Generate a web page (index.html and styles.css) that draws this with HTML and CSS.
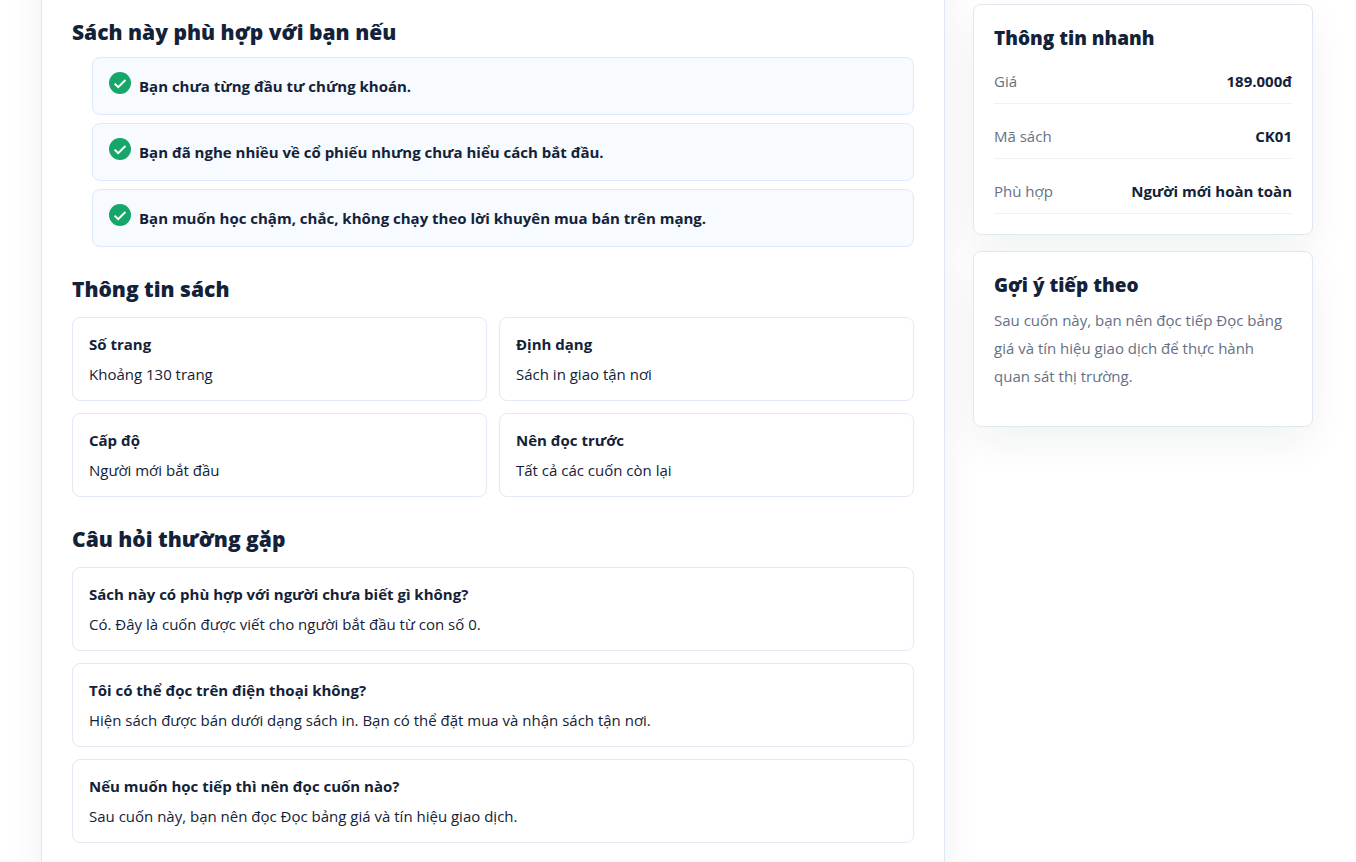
FILE: index.html
```html
<!DOCTYPE html>
<html lang="vi">
<head>
    <meta charset="UTF-8" />
    <meta name="viewport" content="width=device-width, initial-scale=1.0" />
    <link rel="stylesheet" href="styles.css">
    <title>Thông tin sách</title>
</head>
<body>
    <div class="layout">
        <main class="detail">
            <h2>Sách này phù hợp với bạn nếu</h2>
            <ul class="check-list">
                <li>
                    <svg class="check" viewBox="0 0 22 22" aria-hidden="true"><circle cx="11" cy="11" r="11" /><path d="M5.6 11.6l3.6 3.6 7.2-7.2" /></svg>
                    <span>Bạn chưa từng đầu tư chứng khoán.</span>
                </li>
                <li>
                    <svg class="check" viewBox="0 0 22 22" aria-hidden="true"><circle cx="11" cy="11" r="11" /><path d="M5.6 11.6l3.6 3.6 7.2-7.2" /></svg>
                    <span>Bạn đã nghe nhiều về cổ phiếu nhưng chưa hiểu cách bắt đầu.</span>
                </li>
                <li>
                    <svg class="check" viewBox="0 0 22 22" aria-hidden="true"><circle cx="11" cy="11" r="11" /><path d="M5.6 11.6l3.6 3.6 7.2-7.2" /></svg>
                    <span>Bạn muốn học chậm, chắc, không chạy theo lời khuyên mua bán trên mạng.</span>
                </li>
            </ul>

            <h2>Thông tin sách</h2>
            <div class="info-grid">
                <div class="box">
                    <strong>Số trang</strong>
                    <span>Khoảng 130 trang</span>
                </div>
                <div class="box">
                    <strong>Định dạng</strong>
                    <span>Sách in giao tận nơi</span>
                </div>
                <div class="box">
                    <strong>Cấp độ</strong>
                    <span>Người mới bắt đầu</span>
                </div>
                <div class="box">
                    <strong>Nên đọc trước</strong>
                    <span>Tất cả các cuốn còn lại</span>
                </div>
            </div>

            <h2>Câu hỏi thường gặp</h2>
            <div class="faq">
                <div class="box">
                    <strong>Sách này có phù hợp với người chưa biết gì không?</strong>
                    <span>Có. Đây là cuốn được viết cho người bắt đầu từ con số 0.</span>
                </div>
                <div class="box">
                    <strong>Tôi có thể đọc trên điện thoại không?</strong>
                    <span>Hiện sách được bán dưới dạng sách in. Bạn có thể đặt mua và nhận sách tận nơi.</span>
                </div>
                <div class="box">
                    <strong>Nếu muốn học tiếp thì nên đọc cuốn nào?</strong>
                    <span>Sau cuốn này, bạn nên đọc Đọc bảng giá và tín hiệu giao dịch.</span>
                </div>
            </div>
        </main>

        <aside class="sidebar">
            <section class="side-card">
                <h3>Thông tin nhanh</h3>
                <dl class="quick">
                    <div class="quick-row">
                        <dt>Giá</dt>
                        <dd>189.000đ</dd>
                    </div>
                    <div class="quick-row">
                        <dt>Mã sách</dt>
                        <dd>CK01</dd>
                    </div>
                    <div class="quick-row">
                        <dt>Phù hợp</dt>
                        <dd>Người mới hoàn toàn</dd>
                    </div>
                </dl>
            </section>
            <section class="side-card">
                <h3>Gợi ý tiếp theo</h3>
                <p>Sau cuốn này, bạn nên đọc tiếp Đọc bảng giá và tín hiệu giao dịch để thực hành quan sát thị trường.</p>
            </section>
        </aside>
    </div>
</body>
</html>
```
FILE: styles.css
```css
* {
    box-sizing: border-box;
    margin: 0;
    padding: 0;
}
body {
    background: #fff;
    color: #132238;
    font-family: "Segoe UI", "Open Sans", "Noto Sans", sans-serif;
    font-size: 15px;
    line-height: 28px;
    overflow-x: hidden;
}
.layout {
    display: grid;
    grid-template-columns: minmax(0, 1fr) 340px;
    align-items: start;
    gap: 28px;
    min-height: 100vh;
    padding: 0 43px 0 41px;
    overflow: hidden;
}
.detail {
    align-self: stretch;
    margin: -80px 0;
    padding: 97px 30px 99px;
    background: #fff;
    border: 1px solid #dfe7f1;
    box-shadow: 0 16px 40px rgba(15, 35, 30, 0.06);
}
h2 {
    margin: 28px 0 14px;
    font-size: 21px;
    font-weight: 800;
    line-height: 28px;
}
h2:first-child {
    margin: 0 0 11px;
}
.check-list {
    display: grid;
    gap: 8px;
    padding-left: 20px;
    list-style: none;
}
.check-list li {
    display: flex;
    align-items: flex-start;
    gap: 8px;
    padding: 14px 16px;
    background: #f7faff;
    border: 1px solid #dbeafe;
    border-radius: 8px;
    font-weight: 700;
}
.check {
    flex: none;
    width: 22px;
    height: 22px;
}
.check circle {
    fill: #16a66a;
}
.check path {
    fill: none;
    stroke: #fff;
    stroke-width: 2;
}
.info-grid,
.faq {
    display: grid;
    gap: 12px;
}
.info-grid {
    grid-template-columns: 1fr 1fr;
}
.box {
    display: grid;
    gap: 2px;
    padding: 12px 16px;
    background: #fff;
    border: 1px solid #e2eaf5;
    border-radius: 8px;
}
.sidebar {
    display: grid;
    gap: 16px;
    padding-top: 4px;
}
.side-card {
    padding: 20px;
    background: #fff;
    border: 1px solid #dfe7f1;
    border-radius: 8px;
    box-shadow: 0 16px 40px rgba(15, 35, 30, 0.06);
}
h3 {
    margin-bottom: 8px;
    font-size: 19px;
    font-weight: 800;
    line-height: 26px;
}
.side-card p {
    margin-bottom: 16px;
    color: #667085;
}
.quick {
    display: grid;
    gap: 18px;
    padding-top: 8px;
}
.quick-row {
    display: flex;
    justify-content: space-between;
    gap: 12px;
    padding-bottom: 8px;
    border-bottom: 1px solid #edf2f7;
}
.quick-row dt {
    color: #667085;
}
.quick-row dd {
    font-weight: 700;
}
```
